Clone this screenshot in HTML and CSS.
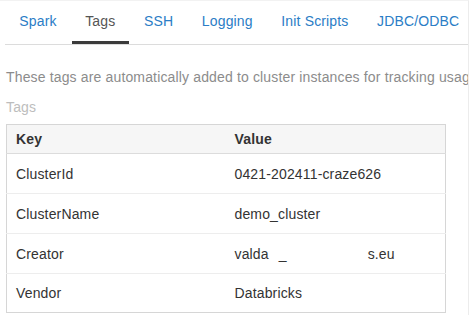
FILE: index.html
```html
<!DOCTYPE html>
<html lang="en">

<head>
    <meta charset="UTF-8">
    <meta name="viewport" content="width=device-width, initial-scale=1.0">
    <title>Cluster - Tags</title>
    <link rel="stylesheet" href="styles.css">
</head>

<body>
    <div class="panel">
        <ul class="tabs">
            <li class="tab">Spark</li>
            <li class="tab active">Tags</li>
            <li class="tab">SSH</li>
            <li class="tab">Logging</li>
            <li class="tab">Init Scripts</li>
            <li class="tab">JDBC/ODBC</li>
        </ul>

        <p class="description">These tags are automatically added to cluster instances for tracking usage</p>
        <div class="label">Tags</div>

        <table class="tag-table">
            <thead>
                <tr>
                    <th class="key-col">Key</th>
                    <th>Value</th>
                </tr>
            </thead>
            <tbody>
                <tr>
                    <td>ClusterId</td>
                    <td>0421-202411-craze626</td>
                </tr>
                <tr>
                    <td>ClusterName</td>
                    <td>demo_cluster</td>
                </tr>
                <tr>
                    <td>Creator</td>
                    <td>valda<span class="under">_</span><span class="tail">s.eu</span></td>
                </tr>
                <tr class="last">
                    <td>Vendor</td>
                    <td>Databricks</td>
                </tr>
            </tbody>
        </table>
    </div>
</body>

</html>
```

FILE: styles.css
```css
* {
    padding: 0;
    margin: 0;
    box-sizing: border-box;
}

body {
    font-family: 'Liberation Sans', Arial, sans-serif;
    font-size: 14px;
    letter-spacing: 0.15px;
    color: #333;
    background: #fff;
    overflow: hidden;
}

.panel {
    width: 469px;
    height: 315px;
    padding-left: 6px;
    border-top: 1px solid #f2f2f2;
    border-right: 1px solid #ececec;
    overflow: hidden;
}

.tabs {
    display: flex;
    list-style: none;
    margin-left: -1px;
    border-bottom: 1px solid #dcdcdc;
    white-space: nowrap;
}

.tab {
    position: relative;
    padding: 1px 14.3px 3px;
    line-height: 39px;
    color: #2b7dc6;
    cursor: pointer;
}

.tab.active {
    color: #555;
}

.tab.active::after {
    content: "";
    position: absolute;
    left: 1px;
    right: 1px;
    bottom: 0;
    height: 3px;
    background: #3b3b3b;
}

.description {
    margin-top: 22px;
    line-height: 20px;
    color: #8c8c8c;
    white-space: nowrap;
}

.label {
    margin-top: 10px;
    line-height: 20px;
    color: #bdbdbd;
}

.tag-table {
    margin-top: 7px;
    width: 440px;
    border-collapse: collapse;
    border: 1px solid #d6d6d6;
}

.tag-table th {
    height: 29px;
    padding: 0 9px;
    text-align: left;
    font-weight: bold;
    background: #f6f6f6;
    border-bottom: 1px solid #dcdcdc;
}

.key-col {
    width: 219px;
}

.tag-table td {
    height: 40px;
    padding: 0 9px;
    border-bottom: 1px solid #ededed;
    white-space: nowrap;
}

.tag-table tr.last td {
    height: 39px;
    border-bottom: none;
}

.under {
    margin-left: 10px;
}

.tail {
    margin-left: 81px;
}
```
